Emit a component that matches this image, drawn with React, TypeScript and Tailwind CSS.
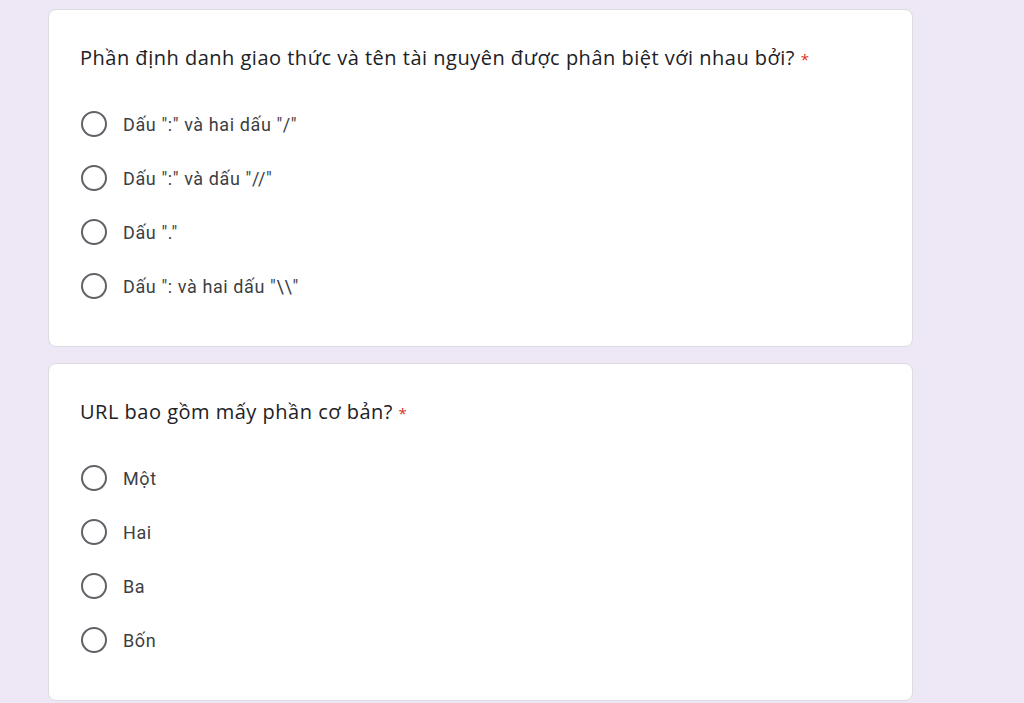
const questions = [
  {
    title: "Phần định danh giao thức và tên tài nguyên được phân biệt với nhau bởi?",
    options: ['Dấu ":" và hai dấu "/"', 'Dấu ":" và dấu "//"', 'Dấu "."', 'Dấu ": và hai dấu "\\\\"'],
  },
  {
    title: "URL bao gồm mấy phần cơ bản?",
    options: ["Một", "Hai", "Ba", "Bốn"],
  },
];

export default function App() {
  return (
    <div className="min-h-screen bg-[#ede7f6] pl-[48px] pt-[9px] font-['Roboto','Noto_Sans',sans-serif]">
      <div className="flex w-[865px] flex-col gap-[16px]">
        {questions.map((q) => (
          <div key={q.title} className="rounded-lg border border-[#dadce0] bg-white px-[31px] pb-[33px] pt-[34px]">
            <div className="h-[28px] font-['Open_Sans',sans-serif] text-[20px] leading-[28px] tracking-[0.5px] text-[#202124]">
              {q.title} <span className="text-[15px] text-[#d93025]">*</span>
            </div>
            <div className="mt-[25px] flex flex-col">
              {q.options.map((o) => (
                <div key={o} className="flex h-[54px] items-center">
                  <span className="ml-[1px] h-[26px] w-[26px] shrink-0 rounded-full border-2 border-[#5f6368]" />
                  <span className="ml-[16px] text-[18px] tracking-[0.6px] text-[#3c4043]">{o}</span>
                </div>
              ))}
            </div>
          </div>
        ))}
      </div>
    </div>
  );
}
